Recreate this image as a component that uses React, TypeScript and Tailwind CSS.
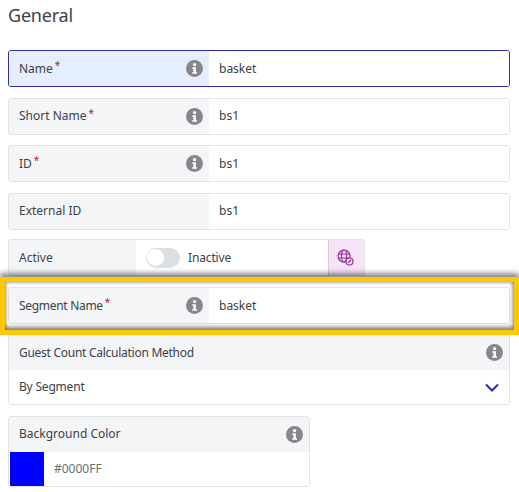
import React from "react";

function Info() {
  return (
    <svg width="17" height="17" viewBox="0 0 17 17" className="shrink-0">
      <circle cx="8.5" cy="8.5" r="8.5" fill="#85878c" />
      <circle cx="8.6" cy="4.6" r="1.7" fill="#fff" />
      <path d="M6.3 7.2h3.6v5h1.1v1.6H6.2v-1.6h1.2V8.8H6.3z" fill="#fff" />
    </svg>
  );
}

function Star() {
  return <span className="text-[#b8123c] text-[10px] leading-none ml-[2px] -mt-[7px]">*</span>;
}

function Row({ label, star, info = true, value, focus, tight }: { label: string; star?: boolean; info?: boolean; value: string; focus?: boolean; tight?: boolean }) {
  return (
    <div className={`flex h-[37px] rounded-[3px] border overflow-hidden ${focus ? "border-[#2f2fa8]" : "border-[#e1e3e6]"}`}>
      <div className={`flex w-[200px] items-center pl-[10px] pr-[6px] ${focus ? "bg-[#e5eefc]" : "bg-[#f4f5f7]"}`}>
        <span className={`text-[#3d4248] ${tight ? "tracking-[-0.3px]" : ""}`}>{label}</span>
        {star && <Star />}
        <span className="flex-1" />
        {info && <Info />}
      </div>
      <div className="flex flex-1 items-center bg-white pl-[10px] text-[#3d4248]">{value}</div>
    </div>
  );
}

export default function App() {
  return (
    <div className="h-[492px] w-[519px] overflow-hidden bg-white text-[12px] pl-[8px] pr-[9px] font-['Noto_Sans','Open_Sans',sans-serif]">
      <h1 className="h-[50px] pt-[2px] text-[18px] leading-[27px] tracking-[-0.2px] text-[#3d4248]">General</h1>
      <div className="flex flex-col gap-[10.5px]">
        <Row label="Name" star value="basket" focus />
        <Row label="Short Name" star value="bs1" />
        <Row label="ID" star value="bs1" />
        <Row label="External ID" info={false} value="bs1" />
        <div className="-mt-[1px] flex h-[37px] w-[357px] rounded-[3px] border border-[#e1e3e6] overflow-hidden">
          <div className="flex w-[127px] items-center bg-[#f4f5f7] pl-[10px] text-[#3d4248]">Active</div>
          <div className="flex flex-1 items-center gap-[8px] bg-white pl-[10px] text-[#3d4248]">
            <span className="flex h-[20px] w-[34px] items-center rounded-full bg-[#dcdfe2] pl-[1px]">
              <span className="h-[17px] w-[17px] rounded-full bg-white" />
            </span>
            <span className="tracking-[-0.15px]">Inactive</span>
          </div>
          <div className="flex w-[36px] items-center justify-center border-l border-[#dcc5dc] bg-[#f5e4f5]">
            <svg width="17" height="17" viewBox="0 0 17 17" fill="none" stroke="#a0289a" strokeWidth="1.2" className="-ml-[2px]">
              <circle cx="7" cy="7" r="6" />
              <ellipse cx="7" cy="7" rx="2.6" ry="6" />
              <path d="M1 5h12M1 9h12" />
              <circle cx="12.5" cy="12.5" r="3.5" fill="#f5e4f5" />
              <path d="M11 13.8l3-2.8" />
            </svg>
          </div>
        </div>
        <div className="relative mt-[0.5px]">
          <div className="pointer-events-none absolute -left-[8px] -top-[10px] z-10 h-[58px] w-[519px] border-[5px] border-[#fec800] shadow-[0_-4px_5px_rgba(0,0,0,0.45),inset_-1px_-3px_4px_rgba(0,0,0,0.5),inset_1px_1px_3px_rgba(0,0,0,0.3)]" />
          <Row label="Segment Name" star value="basket" tight />
        </div>
        <div className="-mt-[0.5px] flex h-[71px] flex-col rounded-[3px] border border-[#e1e3e6] overflow-hidden">
          <div className="flex h-[35px] items-center justify-between bg-[#f4f5f7] pl-[10px] pr-[6px] text-[#3d4248]">
            <span className="tracking-[-0.27px]">Guest Count Calculation Method</span>
            <Info />
          </div>
          <div className="flex flex-1 items-center justify-between bg-white pl-[10px] pr-[10px] text-[#3d4248]">
            <span className="tracking-[-0.2px]">By Segment</span>
            <svg width="14" height="9" viewBox="0 0 14 9" fill="none" stroke="#2b2bb8" strokeWidth="2">
              <path d="M1 1.5l6 6 6-6" />
            </svg>
          </div>
        </div>
        <div className="flex h-[71px] w-[302px] flex-col rounded-[3px] border border-[#e1e3e6] overflow-hidden">
          <div className="flex h-[35px] items-center justify-between bg-[#f4f5f7] pl-[10px] pr-[6px] text-[#3d4248]">
            Background Color
            <Info />
          </div>
          <div className="flex flex-1 items-center bg-white pl-[1px] text-[#6a6f75]">
            <span className="h-[34px] w-[34px] bg-[#0000ff]" />
            <span className="ml-[10px]">#0000FF</span>
          </div>
        </div>
      </div>
    </div>
  );
}
